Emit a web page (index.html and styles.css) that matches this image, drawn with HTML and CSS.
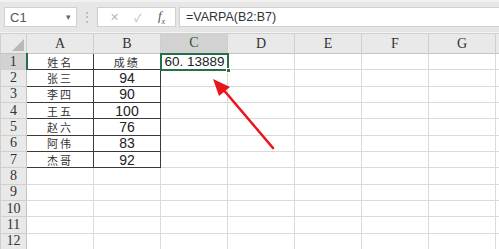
FILE: index.html
```html
<!DOCTYPE html>
<html lang="zh-CN">
<head>
    <meta charset="UTF-8">
    <title>VARPA</title>
    <link rel="stylesheet" href="styles.css">
</head>
<body>
    <div class="formula-bar">
        <div class="name-box">
            <span>C1</span>
            <span class="drop">&#9662;</span>
        </div>
        <div class="grip">&#8942;</div>
        <div class="fx-tools">
            <span class="tool">&#10005;</span>
            <span class="tool">&#10003;</span>
            <span class="tool fx">f<sub>x</sub></span>
        </div>
        <div class="formula-input">=VARPA(B2:B7)</div>
    </div>

    <div class="sheet">
        <table class="grid">
            <colgroup>
                <col class="c-row"><col><col><col><col><col><col><col><col class="c-rest">
            </colgroup>
            <tr class="head">
                <th class="corner"><span class="tri"></span></th>
                <th>A</th><th>B</th><th class="sel">C</th><th>D</th><th>E</th><th>F</th><th>G</th><th></th>
            </tr>
            <tr>
                <th class="num sel">1</th>
                <td class="data cn">姓名</td><td class="data cn">成绩</td>
                <td class="active">60. 13889<span class="handle"></span></td>
                <td></td><td></td><td></td><td></td><td></td>
            </tr>
            <tr>
                <th class="num">2</th>
                <td class="data cn">张三</td><td class="data">94</td>
                <td></td><td></td><td></td><td></td><td></td><td></td>
            </tr>
            <tr>
                <th class="num">3</th>
                <td class="data cn">李四</td><td class="data">90</td>
                <td></td><td></td><td></td><td></td><td></td><td></td>
            </tr>
            <tr>
                <th class="num">4</th>
                <td class="data cn">王五</td><td class="data">100</td>
                <td></td><td></td><td></td><td></td><td></td><td></td>
            </tr>
            <tr>
                <th class="num">5</th>
                <td class="data cn">赵六</td><td class="data">76</td>
                <td></td><td></td><td></td><td></td><td></td><td></td>
            </tr>
            <tr>
                <th class="num">6</th>
                <td class="data cn">阿伟</td><td class="data">83</td>
                <td></td><td></td><td></td><td></td><td></td><td></td>
            </tr>
            <tr>
                <th class="num">7</th>
                <td class="data cn">杰哥</td><td class="data">92</td>
                <td></td><td></td><td></td><td></td><td></td><td></td>
            </tr>
            <tr><th class="num">8</th><td></td><td></td><td></td><td></td><td></td><td></td><td></td><td></td></tr>
            <tr><th class="num">9</th><td></td><td></td><td></td><td></td><td></td><td></td><td></td><td></td></tr>
            <tr><th class="num">10</th><td></td><td></td><td></td><td></td><td></td><td></td><td></td><td></td></tr>
            <tr><th class="num">11</th><td></td><td></td><td></td><td></td><td></td><td></td><td></td><td></td></tr>
            <tr><th class="num">12</th><td></td><td></td><td></td><td></td><td></td><td></td><td></td><td></td></tr>
        </table>

        <!-- annotation arrow over the grid -->
        <svg class="arrow" width="499" height="216" viewBox="0 0 499 216">
            <line x1="273" y1="115" x2="222" y2="55" stroke="#e8161b" stroke-width="2.6" stroke-linecap="round"/>
            <polygon points="213,46 230,54 219,63" fill="#e8161b"/>
        </svg>
    </div>
</body>
</html>
```

FILE: styles.css
```css
* {
    margin: 0;
    padding: 0;
    box-sizing: border-box;
}

body {
    width: 499px;
    height: 249px;
    overflow: hidden;
    background-color: #ffffff;
    font-family: 'Liberation Sans', Arial, sans-serif;
    color: #222;
}

/* formula bar */
.formula-bar {
    height: 33px;
    display: flex;
    align-items: center;
    padding: 0 0 0 4px;
    background-color: #e6e6e6;
    border-top: 2px solid #f1f1f1;
    border-bottom: 1px solid #f4f4f4;
}

.name-box {
    width: 73px;
    height: 20px;
    display: flex;
    align-items: center;
    justify-content: space-between;
    padding: 0 5px 0 5px;
    background-color: #ffffff;
    border: 1px solid #d0d0d0;
    font-size: 13px;
    color: #555;
}

.name-box .drop {
    font-size: 9px;
    color: #666;
}

.grip {
    width: 20px;
    text-align: center;
    font-size: 12px;
    color: #aaa;
}

.fx-tools {
    width: 79px;
    height: 20px;
    display: flex;
    align-items: center;
    justify-content: space-around;
    background-color: #ffffff;
    border: 1px solid #d0d0d0;
    padding: 0 2px 0 4px;
}

.tool {
    font-size: 11px;
    color: #b8b8b8;
}

.tool.fx {
    font-family: 'Liberation Serif', serif;
    font-style: italic;
    font-size: 13px;
    color: #555;
}

.tool.fx sub {
    font-size: 8px;
}

.formula-input {
    flex: 1;
    height: 20px;
    margin-left: 3px;
    padding: 2px 6px;
    background-color: #ffffff;
    border: 1px solid #d0d0d0;
    border-right: none;
    font-size: 12.5px;
    color: #333;
}

/* sheet */
.sheet {
    position: relative;
    width: 499px;
    overflow: hidden;
}

.grid {
    width: 499px;
    table-layout: fixed;
    border-collapse: collapse;
    font-size: 14px;
}

.grid col {
    width: 67px;
}

.grid col.c-row {
    width: 26px;
}

.grid col.c-rest {
    width: 4px;
}

.grid td,
.grid th {
    height: 16.33px;
    padding: 0;
    border: 1px solid #dadada;
    font-weight: normal;
    text-align: center;
    line-height: 14px;
    white-space: nowrap;
    overflow: hidden;
}

.grid tr.head th {
    height: 20px;
    background-color: #e9e9e9;
    border-color: #cfcfcf;
    border-bottom: 1px solid #c4c4c4;
    font-family: 'Liberation Serif', serif;
    font-size: 14px;
    color: #333;
}

.grid tr.head th.sel {
    background-color: #d2d2d2;
    border-bottom: 2px solid #217346;
    color: #2a5a3a;
}

.corner {
    position: relative;
}

.tri {
    position: absolute;
    right: 2px;
    bottom: 2px;
    width: 0;
    height: 0;
    border-left: 12px solid transparent;
    border-bottom: 12px solid #b9b9b9;
}

.grid th.num {
    background-color: #e9e9e9;
    border-color: #cfcfcf;
    border-right: 1px solid #c4c4c4;
    font-family: 'Liberation Serif', serif;
    font-size: 14px;
    color: #333;
}

.grid th.num.sel {
    background-color: #d2d2d2;
    border-right: 2px solid #217346;
}

.grid td.data {
    border: 1px solid #3a3a3a;
    color: #222;
}

.grid td.cn {
    font-family: 'Noto Sans CJK SC', sans-serif;
    font-size: 11px;
    line-height: 12px;
    letter-spacing: 2px;
    color: #333;
}

.grid td.active {
    position: relative;
    overflow: visible;
    border: 2px solid #217346;
    text-align: right;
    padding-right: 2px;
    font-size: 13.5px;
}

.handle {
    position: absolute;
    right: -4px;
    bottom: -4px;
    width: 5px;
    height: 5px;
    background-color: #217346;
    border: 1px solid #ffffff;
}

.arrow {
    position: absolute;
    left: 0;
    top: 0;
    pointer-events: none;
}
```
